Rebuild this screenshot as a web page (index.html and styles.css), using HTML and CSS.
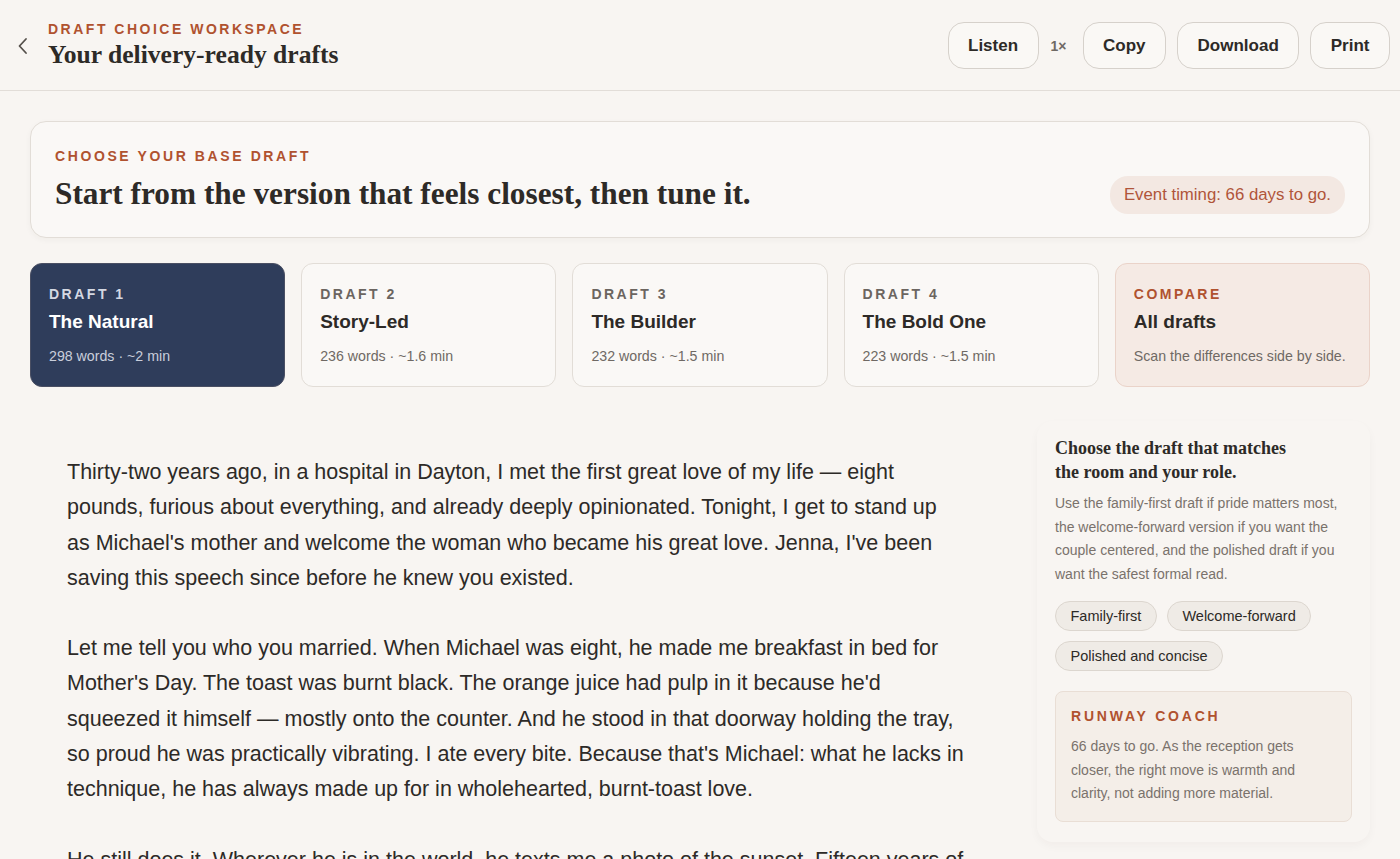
FILE: index.html
```html
<!DOCTYPE html>
<html lang="en">
<head>
    <meta charset="UTF-8">
    <meta name="viewport" content="width=device-width, initial-scale=1.0">
    <title>Draft Choice Workspace</title>
    <link rel="stylesheet" href="styles.css">
</head>
<body>
    <header class="top-bar">
        <div class="top-left">
            <button class="back-button" aria-label="Back">
                <svg width="14" height="20" viewBox="0 0 14 20" fill="none" stroke="#55504b" stroke-width="1.8" stroke-linecap="round" stroke-linejoin="round"><path d="M10 3 L3.5 10 L10 17"/></svg>
            </button>
            <div class="title-block">
                <div class="eyebrow">Draft choice workspace</div>
                <h1>Your delivery-ready drafts</h1>
            </div>
        </div>
        <div class="top-actions">
            <button class="pill-button">Listen</button>
            <span class="speed">1×</span>
            <button class="pill-button">Copy</button>
            <button class="pill-button">Download</button>
            <button class="pill-button">Print</button>
        </div>
    </header>

    <main class="page">
        <!-- 안내 카드 -->
        <section class="intro-card">
            <div>
                <div class="eyebrow">Choose your base draft</div>
                <h2>Start from the version that feels closest, then tune it.</h2>
            </div>
            <span class="timing-pill">Event timing: 66 days to go.</span>
        </section>

        <!-- 초안 선택 카드 -->
        <nav class="draft-row">
            <button class="draft-card active">
                <span class="draft-label">Draft 1</span>
                <span class="draft-name">The Natural</span>
                <span class="draft-meta">298 words · ~2 min</span>
            </button>
            <button class="draft-card">
                <span class="draft-label">Draft 2</span>
                <span class="draft-name">Story-Led</span>
                <span class="draft-meta">236 words · ~1.6 min</span>
            </button>
            <button class="draft-card">
                <span class="draft-label">Draft 3</span>
                <span class="draft-name">The Builder</span>
                <span class="draft-meta">232 words · ~1.5 min</span>
            </button>
            <button class="draft-card">
                <span class="draft-label">Draft 4</span>
                <span class="draft-name">The Bold One</span>
                <span class="draft-meta">223 words · ~1.5 min</span>
            </button>
            <button class="draft-card compare">
                <span class="draft-label">Compare</span>
                <span class="draft-name">All drafts</span>
                <span class="draft-meta">Scan the differences side by side.</span>
            </button>
        </nav>

        <div class="content-grid">
            <article class="speech">
                <p>Thirty-two years ago, in a hospital in Dayton, I met the first great love of my life — eight pounds, furious about everything, and already deeply opinionated. Tonight, I get to stand up as Michael's mother and welcome the woman who became his great love. Jenna, I've been saving this speech since before he knew you existed.</p>
                <p>Let me tell you who you married. When Michael was eight, he made me breakfast in bed for Mother's Day. The toast was burnt black. The orange juice had pulp in it because he'd squeezed it himself — mostly onto the counter. And he stood in that doorway holding the tray, so proud he was practically vibrating. I ate every bite. Because that's Michael: what he lacks in technique, he has always made up for in wholehearted, burnt-toast love.</p>
                <p>He still does it. Wherever he is in the world, he texts me a photo of the sunset. Fifteen years of sunsets, and every one of them still makes me smile.</p>
            </article>

            <aside class="side-panel">
                <h3>Choose the draft that matches the room and your role.</h3>
                <p class="side-text">Use the family-first draft if pride matters most, the welcome-forward version if you want the couple centered, and the polished draft if you want the safest formal read.</p>
                <div class="chip-list">
                    <span class="chip">Family-first</span>
                    <span class="chip">Welcome-forward</span>
                    <span class="chip">Polished and concise</span>
                </div>
                <div class="coach-box">
                    <div class="eyebrow">Runway coach</div>
                    <p>66 days to go. As the reception gets closer, the right move is warmth and clarity, not adding more material.</p>
                </div>
            </aside>
        </div>
    </main>
</body>
</html>
```

FILE: styles.css
```css
/* 기본 스타일 */
body {
    margin: 0;
    background-color: #f8f5f2;
    color: #2d2a27;
    font-family: "Liberation Sans", Arial, sans-serif;
}

button {
    font-family: inherit;
}

/* 공통 라벨 */
.eyebrow {
    font-size: 14px;
    font-weight: 700;
    letter-spacing: 2.6px;
    text-transform: uppercase;
    color: #b0522f;
}

/* 상단 바 */
.top-bar {
    height: 91px;
    box-sizing: border-box;
    border-bottom: 1px solid #e2ddd8;
    display: flex;
    align-items: center;
    justify-content: space-between;
    padding: 0 10px 0 8px;
}

.top-left {
    display: flex;
    align-items: center;
    gap: 10px;
}

.back-button {
    width: 30px;
    height: 36px;
    border: none;
    background: none;
    padding: 0;
    display: flex;
    align-items: center;
    justify-content: center;
    margin-top: 2px;
}

.title-block .eyebrow {
    margin-bottom: 3px;
    letter-spacing: 2.5px;
}

h1 {
    margin: 0;
    font-family: "Liberation Serif", "Times New Roman", serif;
    font-size: 25.6px;
    font-weight: 700;
    color: #2d2a27;
}

.top-actions {
    display: flex;
    align-items: center;
    gap: 11px;
    margin-top: 1px;
}

.pill-button {
    height: 47px;
    padding: 0 19.5px;
    border: 1px solid #d6d1cb;
    border-radius: 16px;
    background-color: #faf8f5;
    font-size: 17px;
    font-weight: 700;
    color: #2d2a27;
}

.speed {
    font-size: 14px;
    font-weight: 700;
    color: #6f6964;
    padding: 0 5px 0 1px;
}

/* 메인 영역 */
.page {
    padding: 30px 30px 0;
}

.intro-card {
    height: 117px;
    box-sizing: border-box;
    border: 1px solid #e2ddd7;
    border-radius: 16px;
    background-color: #faf8f6;
    box-shadow: 0 2px 6px rgba(60, 40, 20, 0.04);
    padding: 26px 24px 0 24px;
    display: flex;
    justify-content: space-between;
    align-items: flex-start;
}

h2 {
    margin: 12px 0 0;
    font-family: "Liberation Serif", "Times New Roman", serif;
    font-size: 31.3px;
    font-weight: 700;
    color: #2d2a27;
}

.timing-pill {
    margin-top: 28px;
    padding: 9px 14px;
    border-radius: 18px;
    background-color: #f3e8e2;
    color: #b0553a;
    font-size: 16.8px;
}

/* 초안 카드 */
.draft-row {
    display: grid;
    grid-template-columns: repeat(5, 1fr);
    gap: 16px;
    margin-top: 25px;
}

.draft-card {
    height: 124px;
    border: 1px solid #e2ddd7;
    border-radius: 12px;
    background-color: #faf8f6;
    padding: 22px 10px 0 18px;
    text-align: left;
    display: flex;
    flex-direction: column;
    align-items: flex-start;
    color: #2d2a27;
}

.draft-label {
    font-size: 14px;
    font-weight: 700;
    letter-spacing: 2.5px;
    text-transform: uppercase;
    color: #6b6560;
}

.draft-name {
    margin-top: 9px;
    font-size: 19px;
    font-weight: 700;
}

.draft-meta {
    margin-top: 15px;
    font-size: 14.2px;
    color: #6f6964;
    white-space: nowrap;
}

.draft-card.active {
    background-color: #2f3d5b;
    border-color: #4a4f63;
    color: #ffffff;
}

.draft-card.active .draft-label {
    color: #d4d8e2;
}

.draft-card.active .draft-meta {
    color: #c9cedb;
}

.draft-card.compare {
    background-color: #f5eae4;
    border-color: #ead3c9;
}

.draft-card.compare .draft-label {
    color: #b0522f;
}

/* 본문과 사이드바 */
.content-grid {
    display: grid;
    grid-template-columns: 1fr 333px;
    gap: 28px;
    margin-top: 34px;
}

.speech {
    padding: 34px 37px 0;
    max-width: 897.5px;
}

.speech p {
    margin: 0 0 35px;
    font-size: 21.5px;
    line-height: 35.3px;
    color: #2d2a27;
}

.side-panel {
    padding: 15px 18px 20px;
    border-radius: 16px;
    box-shadow: 0 4px 10px rgba(60, 40, 20, 0.035);
    align-self: start;
}

h3 {
    margin: 0;
    max-width: 250px;
    font-family: "Liberation Serif", "Times New Roman", serif;
    font-size: 18px;
    line-height: 24px;
    font-weight: 700;
    color: #2d2a27;
}

.side-text {
    margin: 8px 0 0;
    font-size: 14px;
    line-height: 23.5px;
    color: #7a726c;
}

.chip-list {
    display: flex;
    flex-wrap: wrap;
    gap: 10px;
    margin-top: 15px;
}

.chip {
    height: 30px;
    box-sizing: border-box;
    padding: 0 14.5px;
    display: flex;
    align-items: center;
    border: 1px solid #dcd6cf;
    border-radius: 15px;
    background-color: #efebe6;
    font-size: 14.5px;
    color: #2d2a27;
}

.coach-box {
    margin-top: 20px;
    padding: 16px 15px 15px;
    border: 1px solid #e9ded5;
    border-radius: 8px;
    background-color: #f4eee8;
}

.coach-box .eyebrow {
    letter-spacing: 2.8px;
}

.coach-box p {
    margin: 11px 0 0;
    font-size: 14px;
    line-height: 23.5px;
    color: #7a726c;
}
```
